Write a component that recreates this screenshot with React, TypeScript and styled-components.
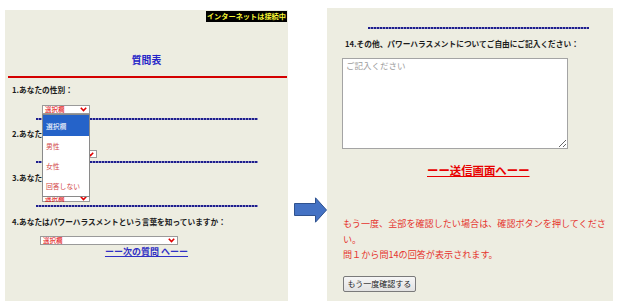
import React from 'react';
import styled, { createGlobalStyle } from 'styled-components';

const GlobalStyle = createGlobalStyle`
  html, body {
    margin: 0;
    padding: 0;
    background: #ffffff;
  }
  body {
    font-family: "Noto Sans CJK JP", "Noto Sans", sans-serif;
  }
`;

const Page = styled.div`
  display: flex;
  width: 622px;
  height: 301px;
  overflow: hidden;
`;

const Panel = styled.section<{ $top: number; $left: number; $width: number }>`
  margin-top: ${({ $top }) => $top}px;
  margin-left: ${({ $left }) => $left}px;
  width: ${({ $width }) => $width}px;
  height: ${({ $top }) => 301 - $top}px;
  background: #ededE1;
  display: flex;
  flex-direction: column;
  flex-shrink: 0;
`;

const StatusRow = styled.div`
  display: flex;
  justify-content: flex-end;
  padding: 1px 1px 0 0;
`;

const StatusBadge = styled.span`
  background: #000;
  color: #f4f433;
  font-size: 7.2px;
  font-weight: 700;
  line-height: 11px;
  padding: 0 1px;
  white-space: nowrap;
`;

const Title = styled.h1`
  margin: 32px 0 0;
  font-size: 9.8px;
  line-height: 12px;
  font-weight: 700;
  color: #2424c8;
  text-align: center;
`;

const RedRule = styled.div`
  margin: 10px 1px 0 3px;
  height: 2px;
  background: #d40000;
`;

const Question = styled.div<{ $mt: number; $indent: number }>`
  margin-top: ${({ $mt }) => $mt}px;
  padding-left: ${({ $indent }) => $indent}px;
  font-size: 7.7px;
  line-height: 10px;
  font-weight: 700;
  color: #1c1c1c;
  white-space: nowrap;
`;

const SelectWrap = styled.div<{ $mt: number; $indent: number; $open?: boolean }>`
  margin-top: ${({ $mt }) => $mt}px;
  margin-left: ${({ $indent }) => $indent}px;
  position: relative;
  align-self: flex-start;
  z-index: ${({ $open }) => ($open ? 2 : 0)};
`;

const SelectBox = styled.div<{ $width: number; $height: number }>`
  box-sizing: border-box;
  width: ${({ $width }) => $width}px;
  height: ${({ $height }) => $height}px;
  border: 1px solid #9a9a9a;
  background: #fff;
  display: flex;
  align-items: center;
  justify-content: space-between;
  padding: 0 2px;
  font-size: 6.5px;
  line-height: 1;
  color: #e00000;
`;

const DropList = styled.ul`
  position: absolute;
  top: 100%;
  left: 0;
  box-sizing: border-box;
  width: 48px;
  margin: 0;
  padding: 0;
  list-style: none;
  background: #fff;
  border: 1px solid #8a8a8a;
`;

const DropItem = styled.li<{ $active?: boolean }>`
  height: ${({ $active }) => ($active ? 21 : 20)}px;
  display: flex;
  align-items: center;
  padding-left: 3px;
  font-size: 6.8px;
  background: ${({ $active }) => ($active ? '#2563c9' : '#fff')};
  color: ${({ $active }) => ($active ? '#ffffff' : '#d24848')};
  white-space: nowrap;
`;

const Divider = styled.div<{ $mt: number; $left: number; $width: number }>`
  margin-top: ${({ $mt }) => $mt}px;
  margin-left: ${({ $left }) => $left}px;
  width: ${({ $width }) => $width}px;
  height: 2px;
  background: repeating-linear-gradient(90deg, #1e1e8c 0 2px, #8c8cc4 2px 3px);
`;

const NextLink = styled.a`
  margin-top: 1px;
  align-self: center;
  font-size: 9px;
  line-height: 12px;
  font-weight: 700;
  color: #3030c4;
  text-decoration: underline;
  white-space: nowrap;
  cursor: pointer;
`;

const ArrowCol = styled.div`
  width: 39px;
  flex-shrink: 0;
  padding-left: 6px;
  box-sizing: border-box;
  padding-top: 197px;
`;

const Memo = styled.textarea`
  margin: 9px 0 0 15px;
  box-sizing: border-box;
  width: 226px;
  height: 91px;
  border: 1px solid #a4a4a4;
  background: #fff;
  padding: 1px 3px;
  font-family: "Noto Sans CJK JP", sans-serif;
  font-size: 8.5px;
  line-height: 11px;
  resize: both;
  outline: none;
  &::placeholder {
    color: #9c9c9c;
  }
`;

const SendLink = styled.a`
  margin: 14px 0 0 100px;
  align-self: flex-start;
  font-size: 11.4px;
  line-height: 14px;
  font-weight: 700;
  color: #e80000;
  text-decoration: underline;
  white-space: nowrap;
  cursor: pointer;
`;

const Notice = styled.p`
  margin: 39px 0 0 16px;
  width: 268px;
  font-size: 9.1px;
  line-height: 15.5px;
  color: #e5342e;
`;

const ConfirmButton = styled.button`
  margin: 13px 0 0 16px;
  align-self: flex-start;
  width: 73px;
  height: 16px;
  padding: 0;
  border: 1px solid #7a7a7a;
  border-radius: 2px;
  background: linear-gradient(#f6f6f6, #e2e2e2);
  font-family: "Noto Sans CJK JP", sans-serif;
  font-size: 8px;
  color: #222;
  cursor: pointer;
`;

const Chevron: React.FC = () => (
  <svg width="7" height="5" viewBox="0 0 7 5">
    <polyline points="0.8,0.8 3.5,3.6 6.2,0.8" fill="none" stroke="#e00000" strokeWidth="1.6" />
  </svg>
);

const Select: React.FC<{ width: number; height?: number }> = ({ width, height = 9 }) => (
  <SelectBox $width={width} $height={height}>
    <span>選択欄</span>
    <Chevron />
  </SelectBox>
);

const Arrow: React.FC = () => (
  <svg width="33" height="26" viewBox="0 0 33 26">
    <polygon
      points="0.5,6.5 21.5,6.5 21.5,0.8 32.5,13 21.5,25.2 21.5,18.5 0.5,18.5"
      fill="#4472c4"
      stroke="#2f528f"
      strokeWidth="1"
    />
  </svg>
);

const App: React.FC = () => {
  const options = ['選択欄', '男性', '女性', '回答しない'];

  return (
    <>
      <GlobalStyle />
      <Page>
        <Panel $top={10} $left={5} $width={283}>
          <StatusRow>
            <StatusBadge>インターネットは接続中</StatusBadge>
          </StatusRow>
          <Title>質問表</Title>
          <RedRule />

          <Question $mt={7} $indent={7}>1.あなたの性別：</Question>
          <SelectWrap $mt={10} $indent={37} $open>
            <Select width={48} />
            <DropList>
              {options.map((o, i) => (
                <DropItem key={o} $active={i === 0}>{o}</DropItem>
              ))}
            </DropList>
          </SelectWrap>
          <Divider $mt={4} $left={31} $width={222} />

          <Question $mt={9} $indent={7}>2.あなたの年齢：</Question>
          <SelectWrap $mt={11} $indent={37}>
            <Select width={55} height={8} />
          </SelectWrap>
          <Divider $mt={3} $left={31} $width={222} />

          <Question $mt={10} $indent={7}>3.あなたの職種：</Question>
          <SelectWrap $mt={11} $indent={37}>
            <Select width={48} height={8} />
          </SelectWrap>
          <Divider $mt={3} $left={31} $width={222} />

          <Question $mt={10} $indent={7}>4.あなたはパワーハラスメントという言葉を知っていますか：</Question>
          <SelectWrap $mt={9} $indent={35}>
            <Select width={138} />
          </SelectWrap>
          <NextLink>ーー次の質問 へーー</NextLink>
        </Panel>

        <ArrowCol>
          <Arrow />
        </ArrowCol>

        <Panel $top={8} $left={0} $width={286}>
          <Divider $mt={19} $left={41} $width={221} />
          <Question $mt={10} $indent={18}>14.その他、パワーハラスメントについてご自由にご記入ください：</Question>
          <Memo placeholder="ご記入ください" />
          <SendLink>ーー送信画面へーー</SendLink>
          <Notice>
            もう一度、全部を確認したい場合は、確認ボタンを押してください。
            <br />
            問１から問14の回答が表示されます。
          </Notice>
          <ConfirmButton>もう一度確認する</ConfirmButton>
        </Panel>
      </Page>
    </>
  );
};

export default App;
